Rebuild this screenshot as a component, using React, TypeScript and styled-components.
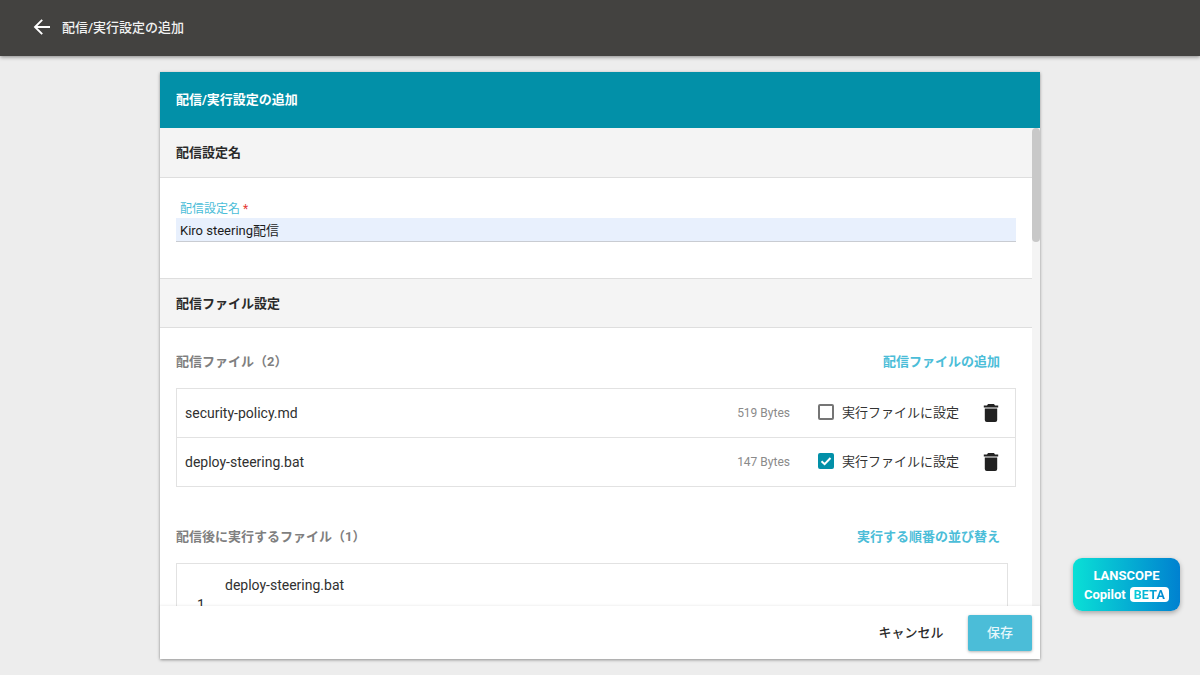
import React from "react";
import styled, { createGlobalStyle } from "styled-components";

const Global = createGlobalStyle`
  html, body { margin: 0; padding: 0; height: 100%; }
  body {
    background: #ededed;
    font-family: Roboto, "Noto Sans CJK JP", sans-serif;
    color: #212121;
    overflow: hidden;
  }
  #root { height: 675px; }
`;

const Page = styled.div`
  width: 1200px;
  height: 675px;
  display: flex;
  flex-direction: column;
  position: relative;
  overflow: hidden;
`;

const TopBar = styled.header`
  height: 56px;
  flex: none;
  box-sizing: border-box;
  background: #434240;
  box-shadow: 0 1px 4px rgba(0, 0, 0, 0.45);
  display: flex;
  align-items: center;
  padding: 0 0 2px 33px;
  gap: 12px;
  color: #fff;
`;

const BackButton = styled.span`
  display: flex;
  width: 17px;
  height: 18px;
`;

const TopTitle = styled.span`
  font-size: 13px;
  font-weight: 500;
  color: #f2f2f2;
  padding-bottom: 2px;
`;

const Main = styled.main`
  flex: 1;
  display: flex;
  justify-content: center;
  padding-top: 16px;
`;

const Card = styled.section`
  width: 880px;
  height: 587px;
  background: #fff;
  display: flex;
  flex-direction: column;
  box-shadow: 0 1px 3px rgba(0, 0, 0, 0.4);
`;

const CardHeader = styled.div`
  height: 56px;
  flex: none;
  box-sizing: border-box;
  background: #0290a8;
  color: #fff;
  font-size: 13px;
  font-weight: 700;
  display: flex;
  align-items: center;
  padding: 0 0 4px 16px;
`;

const ScrollRow = styled.div`
  flex: 1;
  min-height: 0;
  display: flex;
`;

const ScrollContent = styled.div`
  flex: 1;
  min-width: 0;
  overflow: hidden;
`;

const Track = styled.div`
  width: 8px;
  flex: none;
  background: #f4f4f4;
`;

const Thumb = styled.div`
  height: 114px;
  background: #c8c8c8;
  border-radius: 4px;
`;

const SectionHead = styled.div<{ $height: number }>`
  height: ${(p) => p.$height}px;
  box-sizing: border-box;
  background: #f4f4f4;
  border-bottom: 1px solid #dedede;
  display: flex;
  align-items: center;
  padding: 0 0 2px 16px;
  font-size: 13px;
  font-weight: 700;
  color: #2a2a2a;
`;

const NameBody = styled.div`
  height: 101px;
  box-sizing: border-box;
  padding: 23px 16px 0;
  border-bottom: 1px solid #dedede;
`;

const FieldLabel = styled.div`
  font-size: 12px;
  line-height: 16px;
  padding-left: 4px;
  color: #4bbdd8;
  height: 17px;
`;

const Required = styled.span`
  color: #e53935;
  margin-left: 3px;
`;

const TextInput = styled.div`
  height: 24px;
  box-sizing: border-box;
  background: #e8f0fd;
  border-bottom: 1px solid #c9ccd2;
  font-size: 13px;
  line-height: 23px;
  padding: 1px 0 0 4px;
  color: #1c1c1c;
`;

const FileBody = styled.div`
  padding: 0 16px;
`;

const ListHead = styled.div`
  height: 60px;
  box-sizing: border-box;
  display: flex;
  align-items: center;
  justify-content: space-between;
  padding: 4px 16px 0 0;
`;

const ListTitle = styled.span`
  font-size: 13px;
  font-weight: 700;
  color: #7f7f7f;
`;

const LinkAction = styled.span`
  font-size: 13px;
  font-weight: 700;
  color: #4bbdd8;
`;

const FileList = styled.div`
  border: 1px solid #e2e2e2;
  height: 99px;
  box-sizing: border-box;
`;

const FileRow = styled.div<{ $last?: boolean }>`
  height: ${(p) => (p.$last ? 48 : 49)}px;
  box-sizing: border-box;
  display: flex;
  align-items: center;
  padding: 0 16px 0 8px;
  border-bottom: ${(p) => (p.$last ? "none" : "1px solid #e2e2e2")};
`;

const FileName = styled.span`
  flex: 1;
  font-size: 14px;
  color: #303030;
`;

const FileSize = styled.span`
  font-size: 12px;
  color: #8a8a8a;
  margin-right: 28px;
`;

const Check = styled.span<{ $on?: boolean }>`
  width: 16px;
  height: 16px;
  box-sizing: border-box;
  border-radius: 2px;
  border: 2px solid ${(p) => (p.$on ? "#0290a8" : "#757575")};
  background: ${(p) => (p.$on ? "#0290a8" : "#fff")};
  display: flex;
  align-items: center;
  justify-content: center;
  margin: 0 8px 2px 0;
`;

const CheckLabel = styled.span`
  font-size: 13px;
  color: #333;
  margin-right: 24px;
  padding-bottom: 4px;
`;

const Trash = styled.svg`
  width: 16px;
  height: 18px;
  display: block;
`;

const SecondHead = styled(ListHead)`
  margin-top: 16px;
`;

const OrderBox = styled.div`
  width: 832px;
  height: 70px;
  box-sizing: border-box;
  border: 1px solid #e2e2e2;
  display: grid;
  grid-template-columns: 48px 1fr;
  font-size: 14px;
  color: #303030;
`;

const OrderIndex = styled.span`
  padding: 33px 0 0 20px;
`;

const OrderName = styled.span`
  padding-top: 13px;
`;

const Footer = styled.footer`
  height: 53px;
  flex: none;
  box-sizing: border-box;
  background: #fff;
  box-shadow: 0 -1px 2px rgba(0, 0, 0, 0.06);
  display: flex;
  align-items: center;
  justify-content: flex-end;
  padding-right: 8px;
  gap: 13px;
  position: relative;
`;

const CancelButton = styled.span`
  width: 88px;
  text-align: center;
  font-size: 13px;
  font-weight: 500;
  color: #2a2a2a;
  padding-bottom: 2px;
`;

const SaveButton = styled.span`
  width: 64px;
  height: 36px;
  box-sizing: border-box;
  padding-bottom: 2px;
  border-radius: 2px;
  background: #4bbdd8;
  color: #e6f7fb;
  font-size: 13px;
  font-weight: 500;
  display: flex;
  align-items: center;
  justify-content: center;
  box-shadow: 0 1px 3px rgba(0, 0, 0, 0.3);
`;

const Copilot = styled.div`
  position: absolute;
  left: 1073px;
  top: 558px;
  width: 107px;
  height: 53px;
  box-sizing: border-box;
  border-radius: 9px;
  background: linear-gradient(90deg, #0ae0d6, #0081d0);
  box-shadow: 0 2px 5px rgba(0, 0, 0, 0.3);
  color: #fff;
  font-weight: 700;
  font-size: 13px;
  display: flex;
  flex-direction: column;
  align-items: center;
  justify-content: center;
  line-height: 19px;
`;

const CopilotLine = styled.span`
  display: flex;
  align-items: center;
  gap: 4px;
`;

const Beta = styled.span`
  background: #fff;
  border-radius: 4px;
  padding: 0 4px;
  height: 15px;
  display: flex;
  align-items: center;
`;

const BetaText = styled.span`
  font-size: 12.5px;
  line-height: 15px;
  letter-spacing: 0.2px;
  background: linear-gradient(90deg, #08cfd8, #0084d0);
  -webkit-background-clip: text;
  background-clip: text;
  color: transparent;
`;

const TrashIcon = () => (
  <Trash viewBox="0 0 16 18">
    <path fill="#212121" d="M5 0h6l1 1.5h3.2v2H.8v-2H4zM1.8 4.6h12.4V16a2 2 0 0 1-2 2H3.8a2 2 0 0 1-2-2z" />
  </Trash>
);

const files = [
  { name: "security-policy.md", size: "519 Bytes", on: false },
  { name: "deploy-steering.bat", size: "147 Bytes", on: true },
];

export default function App() {
  return (
    <Page>
      <Global />
      <TopBar>
        <BackButton>
          <svg viewBox="0 0 17 18" width="17" height="18" fill="none" stroke="#fff" strokeWidth="1.9">
            <path d="M17 9H2M9.2 1.8 2 9l7.2 7.2" />
          </svg>
        </BackButton>
        <TopTitle>配信/実行設定の追加</TopTitle>
      </TopBar>
      <Main>
        <Card>
          <CardHeader>配信/実行設定の追加</CardHeader>
          <ScrollRow>
            <ScrollContent>
              <SectionHead $height={50}>配信設定名</SectionHead>
              <NameBody>
                <FieldLabel>
                  配信設定名<Required>*</Required>
                </FieldLabel>
                <TextInput>Kiro steering配信</TextInput>
              </NameBody>
              <SectionHead $height={49}>配信ファイル設定</SectionHead>
              <FileBody>
                <ListHead>
                  <ListTitle>配信ファイル（2）</ListTitle>
                  <LinkAction>配信ファイルの追加</LinkAction>
                </ListHead>
                <FileList>
                  {files.map((f, i) => (
                    <FileRow key={f.name} $last={i === files.length - 1}>
                      <FileName>{f.name}</FileName>
                      <FileSize>{f.size}</FileSize>
                      <Check $on={f.on}>
                        {f.on && (
                          <svg viewBox="0 0 12 12" width="12" height="12" fill="none" stroke="#fff" strokeWidth="2">
                            <path d="M1.5 6.2 4.6 9.2 10.5 3" />
                          </svg>
                        )}
                      </Check>
                      <CheckLabel>実行ファイルに設定</CheckLabel>
                      <TrashIcon />
                    </FileRow>
                  ))}
                </FileList>
                <SecondHead>
                  <ListTitle>配信後に実行するファイル（1）</ListTitle>
                  <LinkAction>実行する順番の並び替え</LinkAction>
                </SecondHead>
                <OrderBox>
                  <OrderIndex>1</OrderIndex>
                  <OrderName>deploy-steering.bat</OrderName>
                </OrderBox>
              </FileBody>
            </ScrollContent>
            <Track>
              <Thumb />
            </Track>
          </ScrollRow>
          <Footer>
            <CancelButton>キャンセル</CancelButton>
            <SaveButton>保存</SaveButton>
          </Footer>
        </Card>
      </Main>
      <Copilot>
        <span>LANSCOPE</span>
        <CopilotLine>
          Copilot
          <Beta>
            <BetaText>BETA</BetaText>
          </Beta>
        </CopilotLine>
      </Copilot>
    </Page>
  );
}
